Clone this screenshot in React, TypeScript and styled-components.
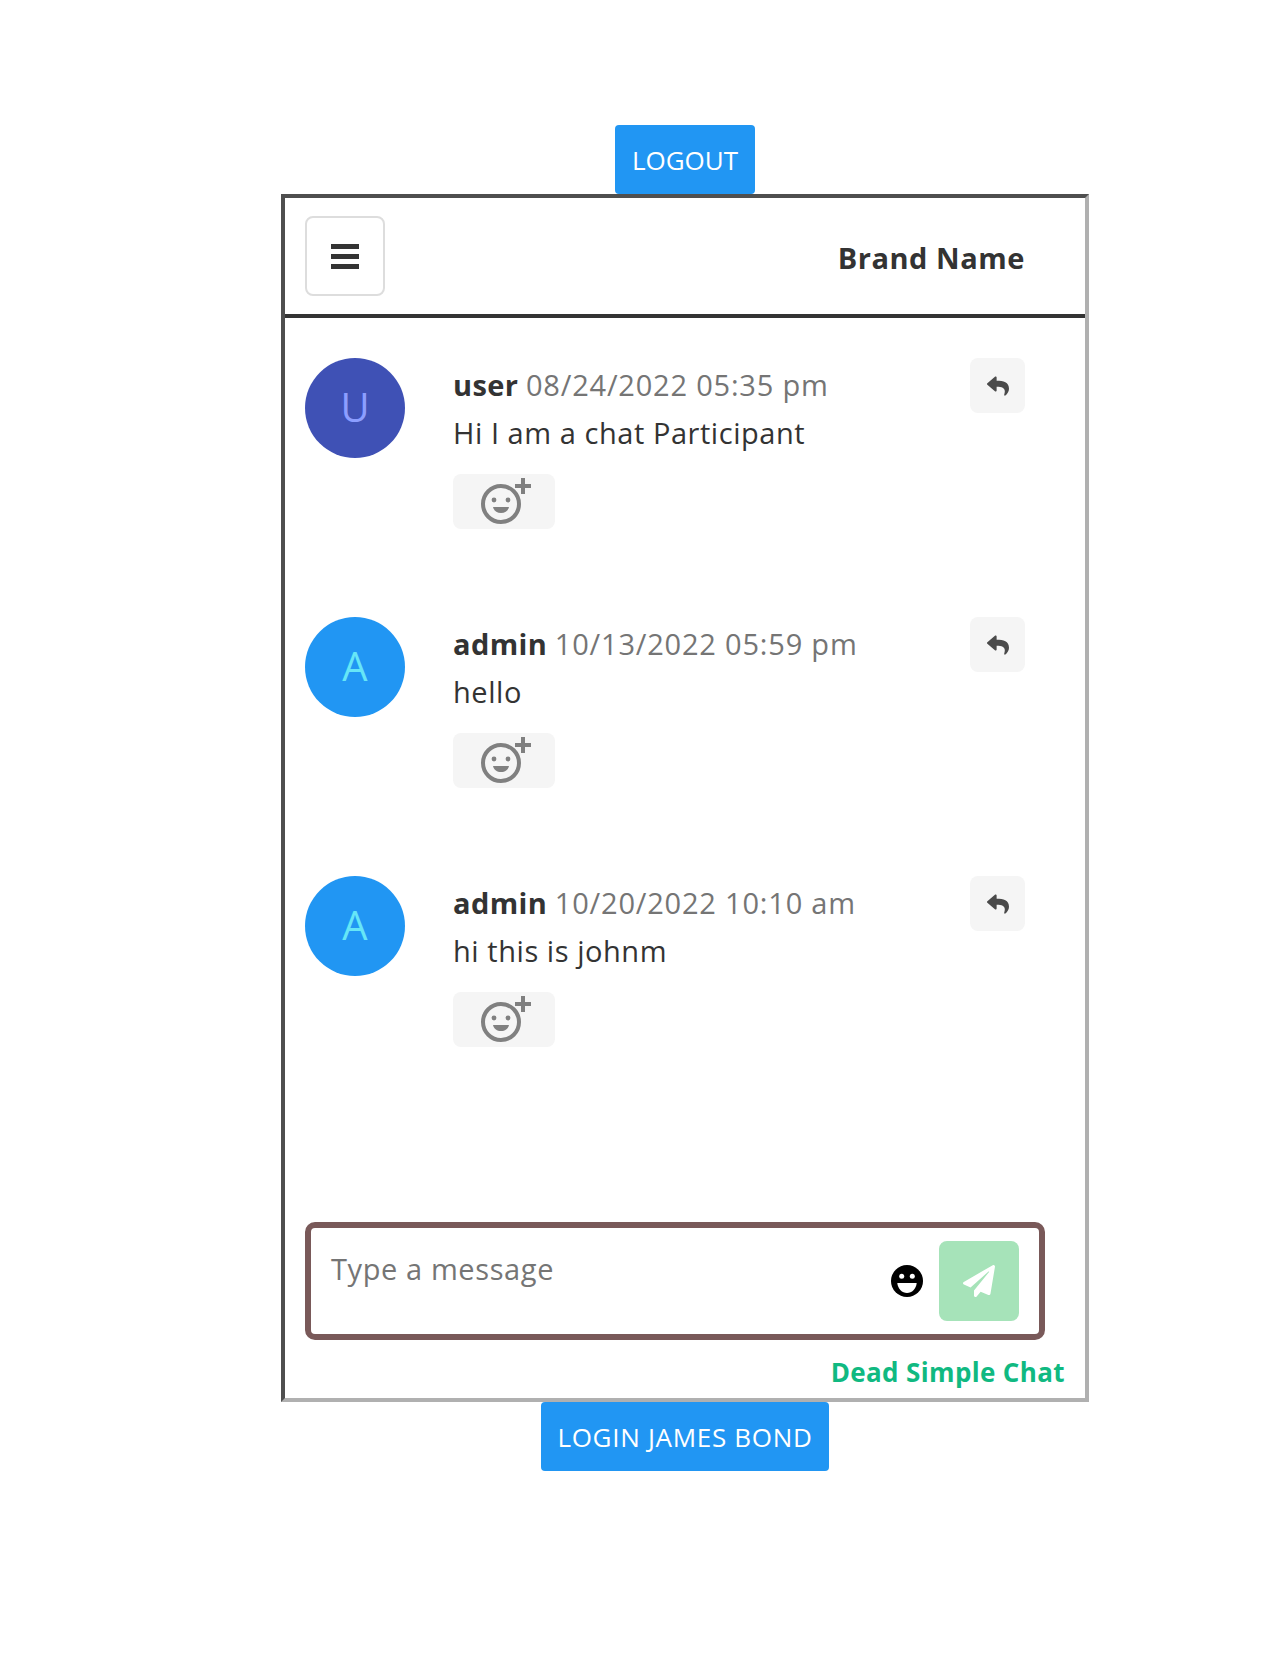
import React from "react";
import styled, { createGlobalStyle } from "styled-components";
import { FaReply, FaPaperPlane } from "react-icons/fa";

const Global = createGlobalStyle`
  html, body { margin: 0; padding: 0; background: #fff; }
  body { font-family: "Open Sans", "Noto Sans", sans-serif; color: #333; }
  * { box-sizing: border-box; }
`;

const Page = styled.div`
  width: 1284px;
  height: 1660px;
  padding: 125px 0 0 281px;
`;

const Stack = styled.div`
  width: 808px;
  display: flex;
  flex-direction: column;
  align-items: center;
`;

const ActionButton = styled.button<{ $width: number; $spacing: number }>`
  width: ${(p) => p.$width}px;
  height: 69px;
  padding: 0;
  border: 0;
  border-radius: 4px;
  background: #2196f3;
  color: #fff;
  font: 400 26px "Open Sans", sans-serif;
  letter-spacing: ${(p) => p.$spacing}px;
  text-transform: uppercase;
  white-space: nowrap;
`;

const Frame = styled.div`
  width: 808px;
  height: 1208px;
  border: 4px solid;
  border-color: #4f4f4f #b0b0b0 #b0b0b0 #4f4f4f;
  display: flex;
  flex-direction: column;
`;

const Header = styled.header`
  height: 120px;
  flex: none;
  border-bottom: 4px solid #333;
  padding: 18px 60px 0 20px;
  display: flex;
  justify-content: space-between;
`;

const MenuButton = styled.button`
  width: 80px;
  height: 80px;
  background: #fff;
  border: 2px solid #ddd;
  border-radius: 8px;
  display: flex;
  align-items: center;
  justify-content: center;
  padding: 0;
`;

const Brand = styled.div`
  font-size: 29px;
  font-weight: 700;
  line-height: 42px;
  margin-top: 21px;
  letter-spacing: 0.55px;
  color: #333;
`;

const MessageList = styled.div`
  flex: 1;
  padding: 40px 60px 0 20px;
  display: flex;
  flex-direction: column;
  gap: 88px;
`;

const Row = styled.article`
  display: flex;
  align-items: flex-start;
  height: 171px;
`;

const Avatar = styled.div<{ $bg: string; $fg: string }>`
  width: 100px;
  height: 100px;
  flex: none;
  border-radius: 50%;
  background: ${(p) => p.$bg};
  color: ${(p) => p.$fg};
  font-size: 40px;
  padding-bottom: 4px;
  display: flex;
  align-items: center;
  justify-content: center;
`;

const Body = styled.div`
  flex: 1;
  margin-left: 48px;
  padding-top: 3px;
`;

const Meta = styled.div`
  font-size: 29px;
  line-height: 48px;
  white-space: nowrap;
`;

const Name = styled.span`
  font-weight: 700;
  letter-spacing: 0.4px;
  color: #333;
`;

const Time = styled.span`
  letter-spacing: 0.8px;
  color: #757575;
`;

const Text = styled.div`
  font-size: 29px;
  line-height: 48px;
  letter-spacing: 0.55px;
  color: #333;
`;

const ReactionButton = styled.button`
  margin-top: 17px;
  width: 102px;
  height: 55px;
  padding: 0 0 4px 2px;
  border: 0;
  border-radius: 8px;
  background: #f5f5f5;
  display: block;
`;

const ReplyButton = styled.button`
  width: 55px;
  height: 55px;
  flex: none;
  border: 0;
  border-radius: 8px;
  background: #f5f5f5;
  color: #4a4a4a;
  display: flex;
  align-items: center;
  justify-content: center;
  padding: 0;
`;

const Composer = styled.div`
  margin: 0 0 0 20px;
  width: 740px;
  height: 118px;
  flex: none;
  border: 6px solid #795959;
  border-radius: 10px;
  padding: 13px 20px 0 20px;
  display: flex;
  align-items: flex-start;
`;

const Placeholder = styled.div`
  flex: 1;
  margin-top: 7px;
  font-size: 29px;
  line-height: 42px;
  letter-spacing: 0.6px;
  color: #757575;
`;

const EmojiSlot = styled.div`
  width: 32px;
  height: 32px;
  margin: 24px 16px 0 0;
  flex: none;
`;

const SendButton = styled.button`
  width: 80px;
  height: 80px;
  flex: none;
  border: 0;
  border-radius: 8px;
  background: #a6e3b9;
  color: #fff;
  display: flex;
  align-items: center;
  justify-content: center;
  padding: 0;
`;

const Footer = styled.div`
  height: 58px;
  flex: none;
  padding: 13px 20px 0 0;
  text-align: right;
  font-size: 26px;
  line-height: 38px;
  font-weight: 700;
  letter-spacing: 0.37px;
  color: #10b981;
`;

const BarsIcon = () => (
  <svg width="28" height="25" viewBox="0 0 28 25" aria-hidden>
    <rect y="0" width="28" height="5" fill="#333" />
    <rect y="10" width="28" height="5" fill="#333" />
    <rect y="20" width="28" height="5" fill="#333" />
  </svg>
);

const ReactionIcon = () => (
  <svg width="52" height="52" viewBox="0 0 52 52" aria-hidden>
    <circle cx="22" cy="30" r="18" fill="none" stroke="#808080" strokeWidth="4" />
    <circle cx="15" cy="26" r="2.4" fill="#808080" />
    <circle cx="29" cy="26" r="2.4" fill="#808080" />
    <path d="M14 33h16c-1 4-4 6-8 6s-7-2-8-6z" fill="#808080" />
    <path d="M44 4v16M36 12h16" stroke="#808080" strokeWidth="4" fill="none" />
  </svg>
);

const GrinIcon = () => (
  <svg width="32" height="32" viewBox="0 0 32 32" aria-hidden>
    <circle cx="16" cy="16" r="16" fill="#000" />
    <circle cx="10.700" cy="11.300" r="2.500" fill="#fff" />
    <circle cx="21.300" cy="11.300" r="2.500" fill="#fff" />
    <path d="M6.300 18h19.400c-.6 6-4.800 10-9.700 10s-9.100-4-9.700-10z" fill="#fff" />
  </svg>
);

const messages = [
  { id: 1, name: "user", time: "08/24/2022 05:35 pm", text: "Hi I am a chat Participant", letter: "U", bg: "#3f51b5", fg: "#8c9eff" },
  { id: 2, name: "admin", time: "10/13/2022 05:59 pm", text: "hello", letter: "A", bg: "#2196f3", fg: "#66e6f7" },
  { id: 3, name: "admin", time: "10/20/2022 10:10 am", text: "hi this is johnm", letter: "A", bg: "#2196f3", fg: "#66e6f7" },
];

export default function App() {
  return (
    <Page>
      <Global />
      <Stack>
        <ActionButton $width={140} $spacing={0}>Logout</ActionButton>
        <Frame>
          <Header>
            <MenuButton aria-label="Menu"><BarsIcon /></MenuButton>
            <Brand>Brand Name</Brand>
          </Header>
          <MessageList>
            {messages.map((m) => (
              <Row key={m.id}>
                <Avatar $bg={m.bg} $fg={m.fg}>{m.letter}</Avatar>
                <Body>
                  <Meta><Name>{m.name}</Name> <Time>{m.time}</Time></Meta>
                  <Text>{m.text}</Text>
                  <ReactionButton aria-label="React"><ReactionIcon /></ReactionButton>
                </Body>
                <ReplyButton aria-label="Reply"><FaReply size={22} /></ReplyButton>
              </Row>
            ))}
          </MessageList>
          <Composer>
            <Placeholder>Type a message</Placeholder>
            <EmojiSlot><GrinIcon /></EmojiSlot>
            <SendButton aria-label="Send"><FaPaperPlane size={32} /></SendButton>
          </Composer>
          <Footer>Dead Simple Chat</Footer>
        </Frame>
        <ActionButton $width={288} $spacing={0.7}>Login James Bond</ActionButton>
      </Stack>
    </Page>
  );
}
